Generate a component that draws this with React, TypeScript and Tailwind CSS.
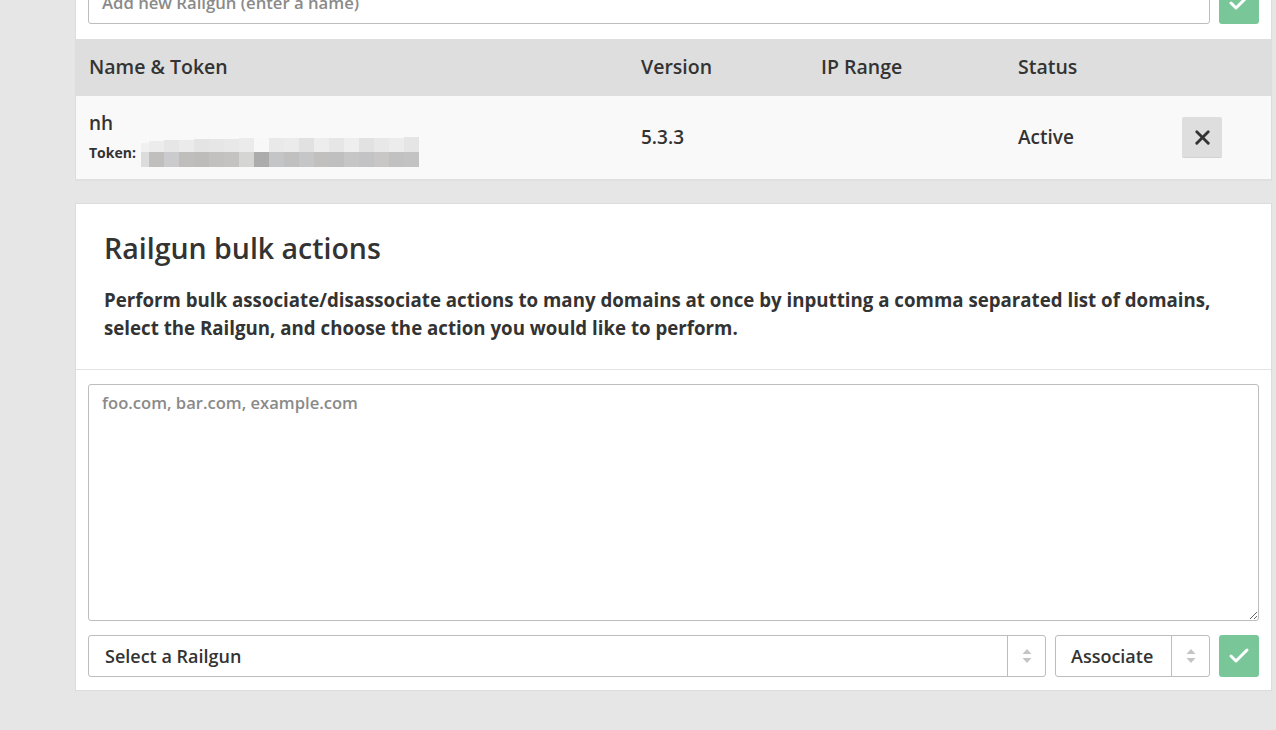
import React from "react";
import { Check, X } from "lucide-react";

const bottomBlocks = [
  "w-[8px] bg-[#dcdcdc]",
  "w-[15px] bg-[#c0bfbd]",
  "w-[15px] bg-[#cbcbcd]",
  "w-[15px] bg-[#bfbebd]",
  "w-[15px] bg-[#bdbcbb]",
  "w-[15px] bg-[#c2c1c0]",
  "w-[15px] bg-[#c4c3c2]",
  "w-[15px] bg-[#d5d5d3]",
  "w-[15px] bg-[#acacac]",
  "w-[15px] bg-[#c4c5c7]",
  "w-[15px] bg-[#c0c0c0]",
  "w-[15px] bg-[#c5c6c8]",
  "w-[15px] bg-[#c1c0be]",
  "w-[15px] bg-[#bfbfbf]",
  "w-[15px] bg-[#c6c6c6]",
  "w-[15px] bg-[#c3c3c5]",
  "w-[15px] bg-[#c8c7c5]",
  "w-[15px] bg-[#c1c1c1]",
  "w-[15px] bg-[#c3c3c3]",
];

const topBlocks = [
  "w-[8px] h-[9px] bg-[#f0f0f0]",
  "w-[15px] h-[11px] bg-[#ececec]",
  "w-[15px] h-[12px] bg-[#e6e6e6]",
  "w-[15px] h-[12px] bg-[#ebebeb]",
  "w-[15px] h-[13px] bg-[#e4e4e4]",
  "w-[15px] h-[13px] bg-[#e6e6e6]",
  "w-[15px] h-[13px] bg-[#e8e8e8]",
  "w-[15px] h-[14px] bg-[#ebebeb]",
  "w-[15px] h-[14px] bg-[#f8f8f8]",
  "w-[15px] h-[14px] bg-[#e9e9e9]",
  "w-[15px] h-[14px] bg-[#ebebeb]",
  "w-[15px] h-[14px] bg-[#e1e1e1]",
  "w-[15px] h-[14px] bg-[#ededed]",
  "w-[15px] h-[14px] bg-[#e6e6e6]",
  "w-[15px] h-[14px] bg-[#eeeeee]",
  "w-[15px] h-[14px] bg-[#e2e2e2]",
  "w-[15px] h-[14px] bg-[#e8e8e8]",
  "w-[15px] h-[14px] bg-[#ececec]",
  "w-[15px] h-[15px] bg-[#e5e5e5]",
];

function Arrows() {
  return (
    <svg width="10" height="16" viewBox="0 0 10 16">
      <path d="M5 1 L9.5 6 L0.5 6 Z" fill="#c4c4c4" />
      <path d="M5 15 L9.5 10 L0.5 10 Z" fill="#c4c4c4" />
    </svg>
  );
}

export default function App() {
  return (
    <div
      className="w-[1276px] h-[730px] overflow-hidden bg-[#e6e6e6] text-[#333]"
      style={{ fontFamily: "'Open Sans', 'Liberation Sans', sans-serif" }}
    >
      <div className="ml-[75px] w-[1198px] -mt-[32px]">
        {/* top card */}
        <div className="bg-white border-x border-[#dcdcdc] border-b-2 border-b-[#e0e0e0] w-[1197px]">
          <div className="flex gap-[9px] px-[12px] pt-[14px] pb-[15px]">
            <div className="flex-1 h-[42px] border border-[#bdbdbd] rounded-[3px] flex items-center pl-[13px] text-[16.7px] font-semibold text-[#8a8a8a]">
              Add new Railgun (enter a name)
            </div>
            <button className="w-[40px] h-[42px] bg-[#79c699] rounded-[3px] flex items-center justify-center">
              <Check size={24} strokeWidth={3} color="white" />
            </button>
          </div>
          <div className="grid grid-cols-[552px_180px_197px_164px_1fr] pl-[13px] h-[57px] pb-[2px] items-center bg-[#dedede] text-[19.5px] font-semibold">
            <div>Name &amp; Token</div>
            <div>Version</div>
            <div>IP Range</div>
            <div>Status</div>
            <div></div>
          </div>
          <div className="grid grid-cols-[552px_180px_197px_164px_1fr] pl-[13px] h-[83px] items-center bg-[#f9f9f9] text-[19px] font-semibold">
            <div className="flex flex-col pt-[3px]">
              <div className="leading-[24px]">nh</div>
              <div className="flex items-center mt-[3px] text-[14px] font-bold leading-[18px]">
                <span>Token:</span>
                <span className="ml-[5px] w-[278px] h-[29px] flex flex-col justify-end">
                  <span className="flex items-end h-[14px]">
                    {topBlocks.map((c, i) => (
                      <span key={i} className={"block " + c} />
                    ))}
                  </span>
                  <span className="flex h-[15px]">
                    {bottomBlocks.map((c, i) => (
                      <span key={i} className={"block h-[15px] " + c} />
                    ))}
                  </span>
                </span>
              </div>
            </div>
            <div>5.3.3</div>
            <div></div>
            <div>Active</div>
            <div>
              <button className="w-[40px] h-[41px] bg-[#dedede] rounded-[2px] border-b border-[#d2d2d2] flex items-center justify-center">
                <X size={23} strokeWidth={3} color="#333" />
              </button>
            </div>
          </div>
        </div>

        {/* bulk actions card */}
        <div className="mt-[22px] bg-white border border-[#dcdcdc] w-[1197px]">
          <div className="px-[28px] pt-[26px] pb-[27px] border-b border-[#e3e3e3]">
            <h2 className="text-[28.5px] font-semibold leading-[36px]">Railgun bulk actions</h2>
            <p className="mt-[20px] text-[18.7px] font-bold leading-[28px] whitespace-nowrap">
              Perform bulk associate/disassociate actions to many domains at once by inputting a comma separated list of domains,
              <br />
              select the Railgun, and choose the action you would like to perform.
            </p>
          </div>
          <div className="px-[12px] pt-[14px] pb-[13px]">
            <textarea
              className="block w-full h-[237px] border border-[#bdbdbd] rounded-[3px] px-[13px] py-[6px] text-[16.6px] font-semibold placeholder:text-[#8a8a8a] outline-none"
              placeholder="foo.com, bar.com, example.com"
            />
            <div className="flex gap-[9px] mt-[14px] h-[42px]">
              <div className="flex-1 flex border border-[#bdbdbd] rounded-[3px]">
                <div className="flex-1 flex items-center pl-[16px] text-[18px] font-semibold">Select a Railgun</div>
                <div className="w-[38px] border-l border-[#bdbdbd] flex items-center justify-center">
                  <Arrows />
                </div>
              </div>
              <div className="w-[155px] flex border border-[#bdbdbd] rounded-[3px]">
                <div className="flex-1 flex items-center pl-[15px] text-[18px] font-semibold">Associate</div>
                <div className="w-[38px] border-l border-[#bdbdbd] flex items-center justify-center">
                  <Arrows />
                </div>
              </div>
              <button className="w-[40px] h-[42px] bg-[#79c699] rounded-[3px] flex items-center justify-center">
                <Check size={24} strokeWidth={3} color="white" />
              </button>
            </div>
          </div>
        </div>
      </div>
    </div>
  );
}
